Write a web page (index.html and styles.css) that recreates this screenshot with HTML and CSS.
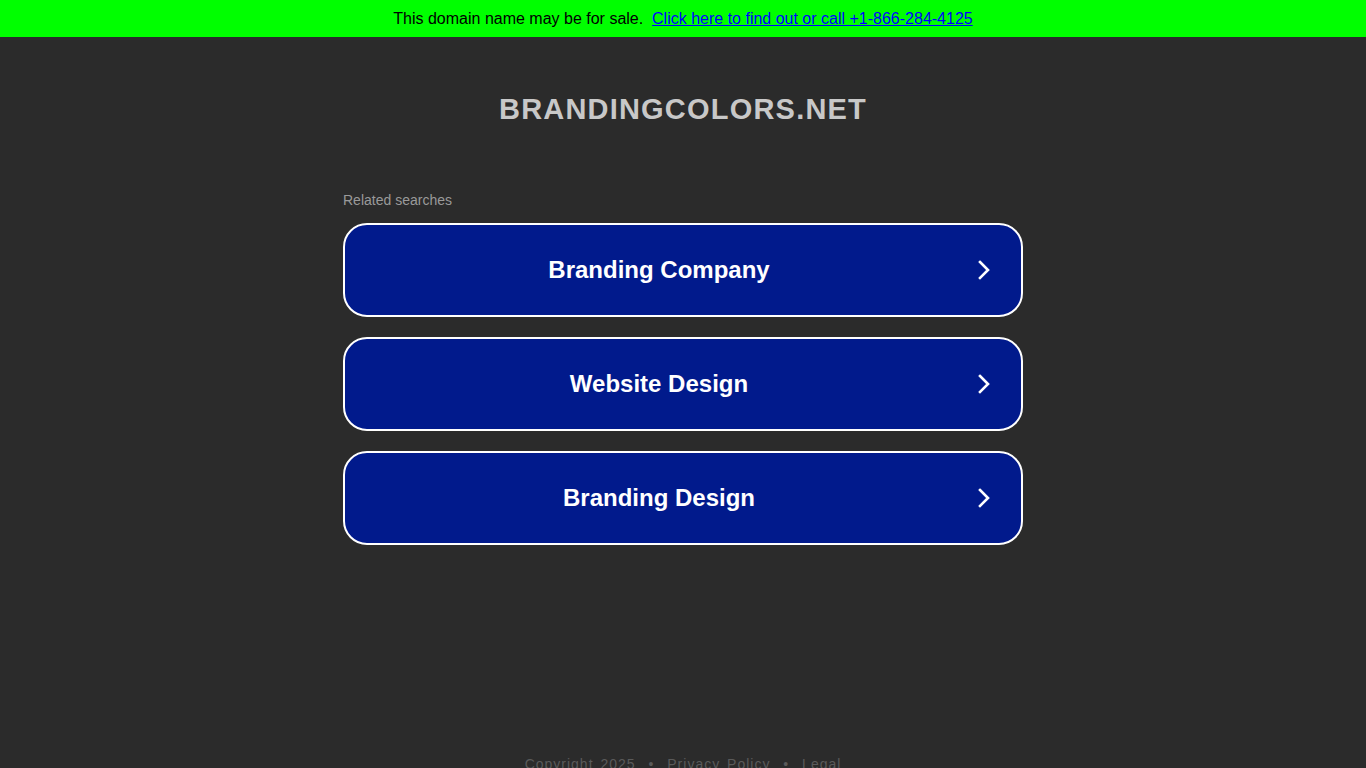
FILE: index.html
```html
<!DOCTYPE html>
<html>
<head>
<meta charset="utf-8">
<link rel="stylesheet" href="styles.css">
</head>
<body>
<div class="banner">This domain name may be for sale.&nbsp; <a href="#" class="banner-link">Click here to find out or call +1-866-284-4125</a></div>
<div class="page">
  <h1 class="domain">BRANDINGCOLORS.NET</h1>
  <div class="related">
    <div class="related-title">Related searches</div>
    <a href="#" class="search-btn"><span class="label">Branding Company</span><svg class="chev" width="14" height="22" viewBox="0 0 14 22"><path d="M3 3 L11 11 L3 19" fill="none" stroke="#fff" stroke-width="2.6" stroke-linecap="square"/></svg></a>
    <a href="#" class="search-btn"><span class="label">Website Design</span><svg class="chev" width="14" height="22" viewBox="0 0 14 22"><path d="M3 3 L11 11 L3 19" fill="none" stroke="#fff" stroke-width="2.6" stroke-linecap="square"/></svg></a>
    <a href="#" class="search-btn"><span class="label">Branding Design</span><svg class="chev" width="14" height="22" viewBox="0 0 14 22"><path d="M3 3 L11 11 L3 19" fill="none" stroke="#fff" stroke-width="2.6" stroke-linecap="square"/></svg></a>
  </div>
  <div class="footer">Copyright 2025 <span class="dot">•</span> <a href="#">Privacy Policy</a> <span class="dot">•</span> <a href="#">Legal</a></div>
</div>
</body>
</html>
```
FILE: styles.css
```css
html, body {
  margin: 0;
  padding: 0;
  background: #2b2b2b;
  font-family: "Liberation Sans", Arial, sans-serif;
  overflow: hidden;
}
.banner {
  background: #00ff00;
  height: 37px;
  line-height: 37px;
  text-align: center;
  font-size: 16px;
  color: #000;
}
.banner-link {
  color: #0000ff;
  text-decoration: underline;
}
.page {
  display: flex;
  flex-direction: column;
  align-items: center;
}
.domain {
  margin: 55px 0 0;
  font-size: 29px;
  font-weight: bold;
  letter-spacing: 1.2px;
  color: #c8c8c8;
  line-height: 34px;
}
.related {
  width: 680px;
  margin-top: 66px;
  display: flex;
  flex-direction: column;
  gap: 20px;
}
.related-title {
  font-size: 14px;
  color: #9a9a9a;
  margin-bottom: -5px;
  line-height: 16px;
}
.search-btn {
  box-sizing: border-box;
  height: 94px;
  border: 2px solid #fff;
  border-radius: 24px;
  background: #011a8c;
  display: flex;
  align-items: center;
  justify-content: center;
  position: relative;
  text-decoration: none;
  color: #fff;
}
.label {
  font-size: 24px;
  font-weight: bold;
  margin-left: -48px;
}
.chev {
  position: absolute;
  right: 30px;
  top: 34px;
}
.footer {
  margin-top: 211px;
  font-size: 14px;
  letter-spacing: 1px;
  color: #5a5a5a;
  line-height: 16px;
  word-spacing: 2px;
}
.footer a {
  color: #5a5a5a;
  text-decoration: none;
}
.dot {
  margin: 0 6px;
}
```
